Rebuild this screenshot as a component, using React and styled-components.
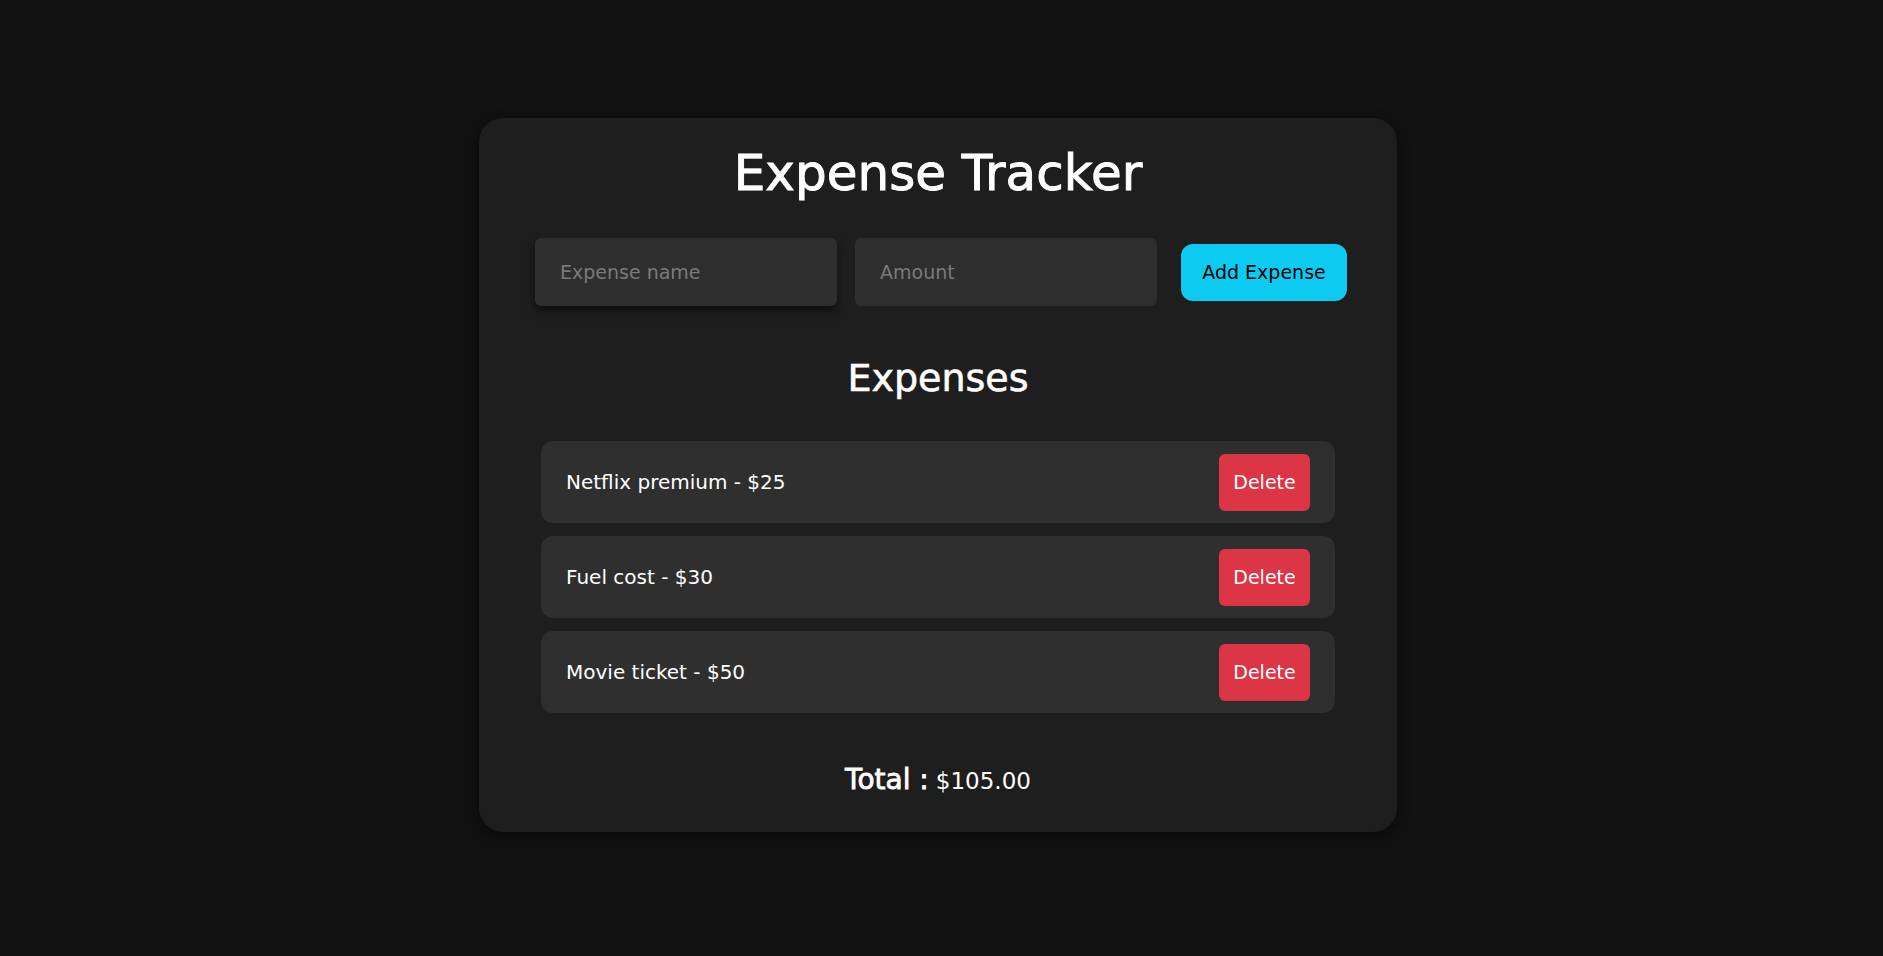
import React, { useState } from "react";
import styled, { createGlobalStyle } from "styled-components";

const GlobalStyle = createGlobalStyle`
  html, body {
    margin: 0;
    padding: 0;
    background: #111111;
    font-family: "DejaVu Sans", "Noto Sans", sans-serif;
  }
`;

const Page = styled.main`
  min-height: 956px;
  display: flex;
  justify-content: center;
  padding: 118px 7px 0 0;
  box-sizing: border-box;
`;

const Card = styled.section`
  width: 918px;
  height: 714px;
  box-sizing: border-box;
  background: #1e1e1e;
  border-radius: 24px;
  box-shadow: 0 4px 14px rgba(0, 0, 0, 0.45);
  padding: 24px 62px 0;
  display: flex;
  flex-direction: column;
  align-items: center;
  color: #ffffff;
`;

const Title = styled.h1`
  margin: 0;
  font-size: 50px;
  line-height: 62px;
  font-weight: 500;
  -webkit-text-stroke: 0.9px #ffffff;
`;

const Form = styled.form`
  margin-top: 34px;
  display: flex;
  align-items: center;
  padding-left: 6px;
`;

const Input = styled.input`
  width: 302px;
  height: 68px;
  box-sizing: border-box;
  margin-right: ${(props) => props.$gap}px;
  padding: 0 25px;
  border: none;
  border-radius: 6px;
  background: #2e2e2e;
  color: #ffffff;
  font-family: inherit;
  font-size: 19px;
  outline: none;
  box-shadow: ${(props) => (props.$raised ? "0 5px 8px rgba(0, 0, 0, 0.55)" : "none")};
  &::placeholder {
    color: #7a7a7a;
  }
`;

const AddButton = styled.button`
  width: 166px;
  height: 57px;
  border: none;
  border-radius: 12px;
  background: #0dcaf0;
  color: #000000;
  font-family: inherit;
  font-size: 19px;
  cursor: pointer;
`;

const SubTitle = styled.h2`
  margin: 48px 0 0;
  font-size: 38px;
  line-height: 48px;
  font-weight: 500;
  -webkit-text-stroke: 0.6px #ffffff;
`;

const List = styled.ul`
  list-style: none;
  margin: 39px 0 0;
  padding: 0;
  width: 100%;
  display: flex;
  flex-direction: column;
  gap: 13px;
`;

const Row = styled.li`
  height: 82px;
  box-sizing: border-box;
  padding: 0 25px;
  border-radius: 12px;
  background: #2f2f2f;
  display: flex;
  align-items: center;
  justify-content: space-between;
  font-size: 20px;
`;

const DeleteButton = styled.button`
  width: 91px;
  height: 57px;
  border: none;
  border-radius: 6px;
  background: #dc3545;
  color: #ffffff;
  font-family: inherit;
  font-size: 19px;
  cursor: pointer;
`;

const Total = styled.p`
  margin: 49px 0 0;
  line-height: 36px;
  display: flex;
  align-items: baseline;
  gap: 7px;
`;

const TotalLabel = styled.strong`
  font-size: 28px;
  font-weight: 500;
  -webkit-text-stroke: 0.8px #ffffff;
`;

const TotalValue = styled.span`
  font-size: 23px;
`;

const initial = [
  { id: 1, name: "Netflix premium", amount: 25 },
  { id: 2, name: "Fuel cost", amount: 30 },
  { id: 3, name: "Movie ticket", amount: 50 },
];

export default function App() {
  const [expenses, setExpenses] = useState(initial);
  const [name, setName] = useState("");
  const [amount, setAmount] = useState("");

  const addExpense = (e) => {
    e.preventDefault();
    if (!name || !amount) return;
    setExpenses([...expenses, { id: Date.now(), name, amount: Number(amount) }]);
    setName("");
    setAmount("");
  };

  const total = expenses.reduce((sum, x) => sum + x.amount, 0);

  return (
    <>
      <GlobalStyle />
      <Page>
        <Card>
          <Title>Expense Tracker</Title>
          <Form onSubmit={addExpense}>
            <Input
              $raised
              $gap={18}
              placeholder="Expense name"
              value={name}
              onChange={(e) => setName(e.target.value)}
            />
            <Input
              $gap={24}
              type="number"
              placeholder="Amount"
              value={amount}
              onChange={(e) => setAmount(e.target.value)}
            />
            <AddButton type="submit">Add Expense</AddButton>
          </Form>
          <SubTitle>Expenses</SubTitle>
          <List>
            {expenses.map((x) => (
              <Row key={x.id}>
                <span>
                  {x.name} - ${x.amount}
                </span>
                <DeleteButton onClick={() => setExpenses(expenses.filter((y) => y.id !== x.id))}>
                  Delete
                </DeleteButton>
              </Row>
            ))}
          </List>
          <Total>
            <TotalLabel>Total :</TotalLabel>
            <TotalValue>${total.toFixed(2)}</TotalValue>
          </Total>
        </Card>
      </Page>
    </>
  );
}
